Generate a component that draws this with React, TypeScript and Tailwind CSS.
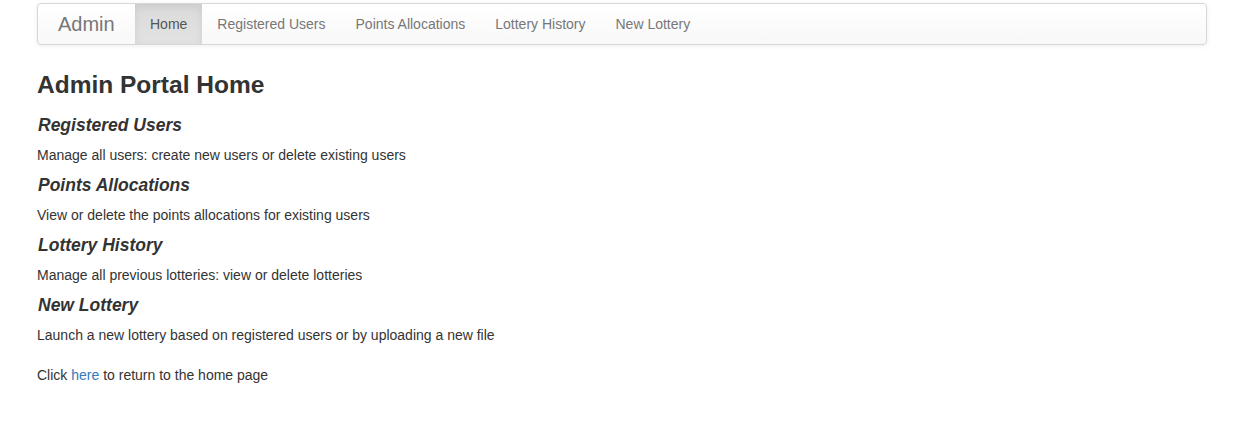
export default function App() {
  const items = ["Registered Users", "Points Allocations", "Lottery History", "New Lottery"];
  const sections = [
    ["Registered Users", "Manage all users: create new users or delete existing users"],
    ["Points Allocations", "View or delete the points allocations for existing users"],
    ["Lottery History", "Manage all previous lotteries: view or delete lotteries"],
    ["New Lottery", "Launch a new lottery based on registered users or by uploading a new file"],
  ];
  return (
    <div className="min-h-[431px] bg-white text-[#333] text-[14px] pl-[37px] pt-[3px]" style={{ fontFamily: '"Liberation Sans", Arial, sans-serif' }}>
      <nav className="w-[1170px] h-[42px] flex items-stretch rounded-[4px] border border-[#d7d7d7] bg-gradient-to-b from-white to-[#f8f8f8] shadow-[inset_0_1px_0_rgba(255,255,255,0.15),0_1px_5px_rgba(0,0,0,0.075)]">
        <a className="w-[97px] pl-[20px] flex items-center text-[20px] text-[#777]">Admin</a>
        <a className="px-[15px] flex items-center text-[#555] bg-gradient-to-b from-[#dbdbdb] to-[#e2e2e2] shadow-[inset_0_3px_9px_rgba(0,0,0,0.075)]">Home</a>
        {items.map((t) => (
          <a key={t} className="px-[15px] flex items-center text-[#777]">{t}</a>
        ))}
      </nav>
      <h3 className="mt-[27px] text-[24.5px] leading-[26px] font-bold">Admin Portal Home</h3>
      <div className="mt-[17px]">
        {sections.map(([h, p]) => (
          <div key={h} className="h-[60px]">
            <h4 className="pl-px text-[17.5px] leading-[20px] font-bold italic">{h}</h4>
            <p className="mt-[10px] leading-[20px]">{p}</p>
          </div>
        ))}
      </div>
      <p className="mt-[10px] leading-[20px]">
        Click <a className="text-[#337ab7]">here</a> to return to the home page
      </p>
    </div>
  );
}
